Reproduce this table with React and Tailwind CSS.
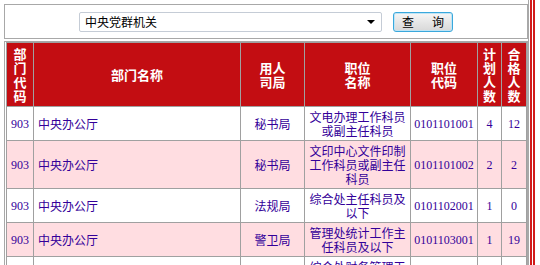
const rows = [
  { code: "903", dept: "中央办公厅", bureau: "秘书局", pos: ["文电办理工作科员", "或副主任科员"], posCode: "0101101001", plan: "4", pass: "12", h: "h-[34px]" },
  { code: "903", dept: "中央办公厅", bureau: "秘书局", pos: ["文印中心文件印制", "工作科员或副主任", "科员"], posCode: "0101101002", plan: "2", pass: "2", h: "h-[48px]" },
  { code: "903", dept: "中央办公厅", bureau: "法规局", pos: ["综合处主任科员及", "以下"], posCode: "0101102001", plan: "1", pass: "0", h: "h-[34px]" },
  { code: "903", dept: "中央办公厅", bureau: "警卫局", pos: ["管理处统计工作主", "任科员及以下"], posCode: "0101103001", plan: "1", pass: "19", h: "h-[34px]" },
  { code: "903", dept: "中央办公厅", bureau: "警卫局", pos: ["综合处财务管理工", "作科员或副主任科", "员"], posCode: "0101103002", plan: "1", pass: "8", h: "h-[48px]" },
];

const cjk = { fontFamily: '"Noto Sans CJK SC", "Noto Sans", sans-serif' };
const serif = { fontFamily: '"Liberation Serif", "Noto Sans CJK SC", serif' };

function Vert({ chars }) {
  return (
    <div className="flex flex-col items-center">
      {chars.split("").map((c, i) => (
        <span key={i} className="block h-[14px]">{c}</span>
      ))}
    </div>
  );
}

export default function App() {
  const th = "border border-[#a0a0a0] bg-[#c30d12] text-white font-bold text-[13px] leading-[14px] text-center align-middle p-0";
  const td = "border border-[#a0a0a0] text-[#330099] text-[12px] leading-[14px] align-middle p-0";

  return (
    <div className="w-[540px] h-[265px] overflow-hidden bg-white flex" style={cjk}>
      <div className="w-[528px] shrink-0 pl-[4px] pt-[4px] flex flex-col">
        <div className="w-[524px] h-[35px] shrink-0 border border-[#a8a8a8] flex items-center justify-center gap-[11px]">
          <div className="w-[303px] h-[20px] border border-[#c5ccd6] rounded-[2px] bg-white flex items-center justify-between pl-[5px] pr-[6px]">
            <span className="text-[12px] text-black leading-none">中央党群机关</span>
            <span className="w-0 h-0 border-l-[4px] border-r-[4px] border-t-[4px] border-l-transparent border-r-transparent border-t-black"></span>
          </div>
          <button className="w-[60px] h-[20px] border border-[#3aa8dc] rounded-[3px] bg-gradient-to-b from-[#f6f6f6] to-[#d8d8d8] flex items-center justify-center gap-[18px] text-[12px] text-black leading-none shadow-[inset_0_0_0_1px_#bfe4f5]">
            <span>查</span>
            <span>询</span>
          </button>
        </div>
        <div className="w-[524px] shrink-0 mt-[2px] border border-[#a8a8a8] pl-[1px]">
          <table className="table-fixed border-collapse w-[520px]">
            <colgroup>
              <col className="w-[27px]" />
              <col className="w-[207px]" />
              <col className="w-[64px]" />
              <col className="w-[106px]" />
              <col className="w-[67px]" />
              <col className="w-[24px]" />
              <col className="w-[25px]" />
            </colgroup>
            <thead>
              <tr className="h-[64px]">
                <th className={th}><Vert chars="部门代码" /></th>
                <th className={th}>部门名称</th>
                <th className={th}>用人<br />司局</th>
                <th className={th}>职位<br />名称</th>
                <th className={th}>职位<br />代码</th>
                <th className={th}><Vert chars="计划人数" /></th>
                <th className={th}><Vert chars="合格人数" /></th>
              </tr>
            </thead>
            <tbody>
              {rows.map((r, i) => (
                <tr key={i} className={`${r.h} ${i % 2 === 1 ? "bg-[#ffdde1]" : "bg-white"}`}>
                  <td className={`${td} text-center`} style={serif}>{r.code}</td>
                  <td className={`${td} pl-[4px]`}>{r.dept}</td>
                  <td className={`${td} text-center`}>{r.bureau}</td>
                  <td className={`${td} text-center`}>
                    {r.pos.map((l, j) => (
                      <div key={j}>{l}</div>
                    ))}
                  </td>
                  <td className={`${td} text-center`} style={serif}>{r.posCode}</td>
                  <td className={`${td} text-center`} style={serif}>{r.plan}</td>
                  <td className={`${td} text-center`} style={serif}>{r.pass}</td>
                </tr>
              ))}
            </tbody>
          </table>
        </div>
      </div>
      <div className="w-[1px] h-full shrink-0 bg-[#a8a8a8]"></div>
      <div className="w-[1px] h-full shrink-0"></div>
      <div className="w-[2px] h-full shrink-0 bg-[#d21a1a]"></div>
      <div className="w-[1px] h-full shrink-0"></div>
      <div className="w-[2px] h-full shrink-0 bg-[#d21a1a]"></div>
    </div>
  );
}
